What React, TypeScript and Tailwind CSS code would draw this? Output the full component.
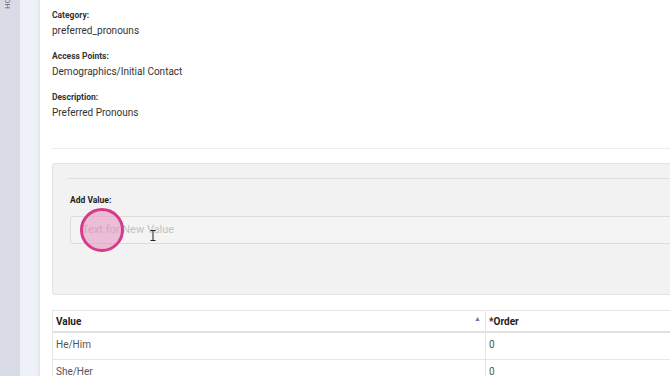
import React from "react";

export default function App() {
  const font = { fontFamily: "Roboto, 'Liberation Sans', sans-serif" };
  return (
    <div className="flex w-[670px] h-[376px] overflow-hidden bg-white" style={font}>
      <div className="w-[20px] shrink-0 bg-[#d9dce6] relative">
        <div className="absolute left-[4px] top-[-2px] text-[8px] text-[#666] [writing-mode:vertical-rl] rotate-180 leading-none">HC</div>
      </div>
      <div className="w-[20px] shrink-0 bg-[#eef1f8]" />
      <div className="flex-1 min-w-0 bg-white shadow-[-1px_0_3px_rgba(0,0,0,0.08)] pl-[12px] pt-[10px]">
        <div className="flex flex-col gap-[13px] text-[#333]">
          <div>
            <div className="text-[8.5px] font-bold leading-[11px]">Category:</div>
            <div className="text-[10px] leading-[14px] mt-[3px]">preferred_pronouns</div>
          </div>
          <div>
            <div className="text-[8.5px] font-bold leading-[11px]">Access Points:</div>
            <div className="text-[10px] leading-[14px] mt-[3px]">Demographics/Initial Contact</div>
          </div>
          <div>
            <div className="text-[8.5px] font-bold leading-[11px]">Description:</div>
            <div className="text-[10px] leading-[14px] mt-[3px]">Preferred Pronouns</div>
          </div>
        </div>
        <div className="mt-[28px] h-px bg-[#ececec]" />
        <div className="mt-[14px] h-[132px] bg-[#f2f2f2] border border-[#e3e3e3] rounded-l-[3px] border-r-0 pl-[14px] pt-[14px]">
          <div className="h-px bg-[#e0e0e0]" />
          <div className="pl-[3px] mt-[16px] text-[8.5px] font-bold text-[#222] leading-[10px]">Add Value:</div>
          <div className="relative ml-[3px] mt-[11px] h-[28px] border border-[#dcdcdc] border-r-0 rounded-l-[4px] bg-[#f4f4f4] flex items-center pl-[11px]">
            <span className="text-[11px] text-[#c2c2c2]">Text for New Value</span>
            <div className="absolute left-[9px] top-[-9px] w-[44px] h-[44px] rounded-full border-[3px] border-[#d63a8a] bg-[#e48fbd]/55" />
            <svg className="absolute left-[79px] top-[13px]" width="6" height="11" viewBox="0 0 6 11">
              <path d="M0.5 0.5h5M0.5 10.5h5M3 0.5v10" stroke="#222" strokeWidth="1" fill="none" />
            </svg>
          </div>
        </div>
        <div className="mt-[15px] border border-[#e6e6e6] border-r-0">
          <div className="flex h-[22px] border-b-2 border-[#e2e2e2] text-[10px] font-bold text-[#222]">
            <div className="w-[433px] flex items-center justify-between pl-[3px] pr-[4px] border-r border-[#e6e6e6]">
              <span>Value</span>
              <span className="text-[7px] text-[#7070c8] -mt-[4px]">▲</span>
            </div>
            <div className="flex-1 flex items-center pl-[3px]">*Order</div>
          </div>
          <div className="flex h-[27px] border-b border-[#e6e6e6] text-[10px] text-[#555]">
            <div className="w-[433px] pl-[3px] pt-[4px] border-r border-[#e6e6e6]">He/Him</div>
            <div className="flex-1 pl-[3px] pt-[4px]">0</div>
          </div>
          <div className="flex h-[27px] text-[10px] text-[#555]">
            <div className="w-[433px] pl-[3px] pt-[4px] border-r border-[#e6e6e6]">She/Her</div>
            <div className="flex-1 pl-[3px] pt-[4px]">0</div>
          </div>
        </div>
      </div>
    </div>
  );
}
